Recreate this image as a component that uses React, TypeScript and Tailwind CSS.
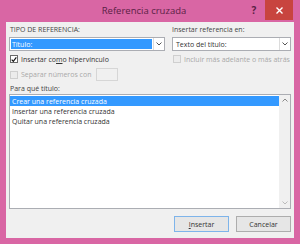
import React from "react";

function Check({ checked, disabled }: { checked?: boolean; disabled?: boolean }) {
  return (
    <div
      className={
        "w-[8px] h-[8px] border flex items-center justify-center shrink-0 " +
        (disabled ? "border-[#cfcfcf] bg-[#ececec]" : "border-[#6a6a6a] bg-white")
      }
    >
      {checked && (
        <svg width="7" height="7" viewBox="0 0 7 7">
          <path d="M0.8 3.6 L2.7 5.6 L6.2 1" stroke="#111" strokeWidth="1.4" fill="none" />
        </svg>
      )}
    </div>
  );
}

function Chevron() {
  return (
    <svg width="6" height="4" viewBox="0 0 6 4">
      <path d="M0.5 0.5 L3 3 L5.5 0.5" stroke="#555" strokeWidth="1" fill="none" />
    </svg>
  );
}

export default function App() {
  return (
    <div
      className="w-[300px] h-[244px] bg-[#d966a4] flex flex-col text-[#333] overflow-hidden"
      style={{ fontFamily: '"Open Sans", "Noto Sans", sans-serif' }}
    >
      {/* title bar */}
      <div className="h-[22px] flex items-start shrink-0">
        <div className="flex-1 h-[22px] flex items-center justify-center pl-[40px] text-[9.5px] text-[#5a1f45]">
          Referencia cruzada
        </div>
        <div className="w-[12px] h-[20px] flex items-center justify-center text-[10px] font-bold text-[#5a1f45] mr-[5px]">
          ?
        </div>
        <div className="w-[28px] h-[20px] bg-[#c8443f] flex items-center justify-center mr-[7px]">
          <svg width="7" height="7" viewBox="0 0 7 7">
            <path d="M0.5 0.5 L6.5 6.5 M6.5 0.5 L0.5 6.5" stroke="#fff" strokeWidth="1.4" />
          </svg>
        </div>
      </div>

      {/* body */}
      <div className="mx-[6px] h-[216px] bg-[#f0f0f0] flex flex-col pl-[3px] pr-[3px] text-[7px] leading-none">
        <div className="flex gap-[7px] pt-[3px]">
          {/* left column */}
          <div className="w-[156px] flex flex-col">
            <div className="h-[9px] flex items-center pl-[1px] text-[#444]">TIPO DE REFERENCIA:</div>
            <div className="mt-[3px] h-[14px] border border-[#abadb3] bg-white flex">
              <div className="flex-1 m-[1px] bg-[#3399ff] text-white flex items-center pl-[1px]">
                Título:
              </div>
              <div className="w-[11px] flex items-center justify-center border-l border-[#dcdcdc]">
                <Chevron />
              </div>
            </div>
            <div className="mt-[4px] h-[8px] flex items-center gap-[3px] pl-[1px]">
              <Check checked />
              <span>
                Insertar co<span className="underline">m</span>o hipervínculo
              </span>
            </div>
            <div className="mt-[5px] h-[13px] flex items-center gap-[3px] pl-[1px]">
              <Check disabled />
              <span className="text-[#a8a8a8] w-[72px]">Separar números con</span>
              <div className="w-[22px] h-[13px] border border-[#d6d6d6] bg-[#f0f0f0]" />
            </div>
          </div>
          {/* right column */}
          <div className="flex-1 flex flex-col">
            <div className="h-[9px] flex items-center text-[#444]">Insertar referencia en:</div>
            <div className="mt-[3px] h-[14px] border border-[#abadb3] bg-white flex">
              <div className="flex-1 flex items-center pl-[3px] text-[#333]">Texto del título:</div>
              <div className="w-[11px] flex items-center justify-center border-l border-[#dcdcdc]">
                <Chevron />
              </div>
            </div>
            <div className="mt-[4px] h-[8px] flex items-center gap-[3px] pl-[1px]">
              <Check disabled />
              <span className="text-[#a8a8a8]">Incluir más adelante o más atrás</span>
            </div>
          </div>
        </div>

        <div className="mt-[3px] h-[9px] flex items-center pl-[1px] text-[#444]">Para qué título:</div>

        <div className="mt-[1px] h-[115px] border border-[#abadb3] bg-white flex">
          <div className="flex-1 flex flex-col pt-[1px]">
            <div className="h-[10px] bg-[#3399ff] text-white flex items-center pl-[2px]">
              Crear una referencia cruzada
            </div>
            <div className="h-[10px] flex items-center pl-[2px]">Insertar una referencia cruzada</div>
            <div className="h-[10px] flex items-center pl-[2px]">Quitar una referencia cruzada</div>
          </div>
          <div className="w-[11px] bg-[#f0f0f0] flex flex-col justify-between items-center py-[3px]">
            <svg width="6" height="4" viewBox="0 0 6 4">
              <path d="M0.5 3.5 L3 1 L5.5 3.5" stroke="#888" strokeWidth="1" fill="none" />
            </svg>
            <svg width="6" height="4" viewBox="0 0 6 4">
              <path d="M0.5 0.5 L3 3 L5.5 0.5" stroke="#bbb" strokeWidth="1" fill="none" />
            </svg>
          </div>
        </div>

        <div className="mt-[7px] flex justify-end gap-[7px]">
          <div className="w-[55px] h-[16px] border border-[#7eb4ea] bg-[#e6e6e6] flex items-center justify-center">
            <span>
              <span className="underline">I</span>nsertar
            </span>
          </div>
          <div className="w-[55px] h-[16px] border border-[#adadad] bg-[#e6e6e6] flex items-center justify-center">
            Cancelar
          </div>
        </div>
      </div>
    </div>
  );
}
